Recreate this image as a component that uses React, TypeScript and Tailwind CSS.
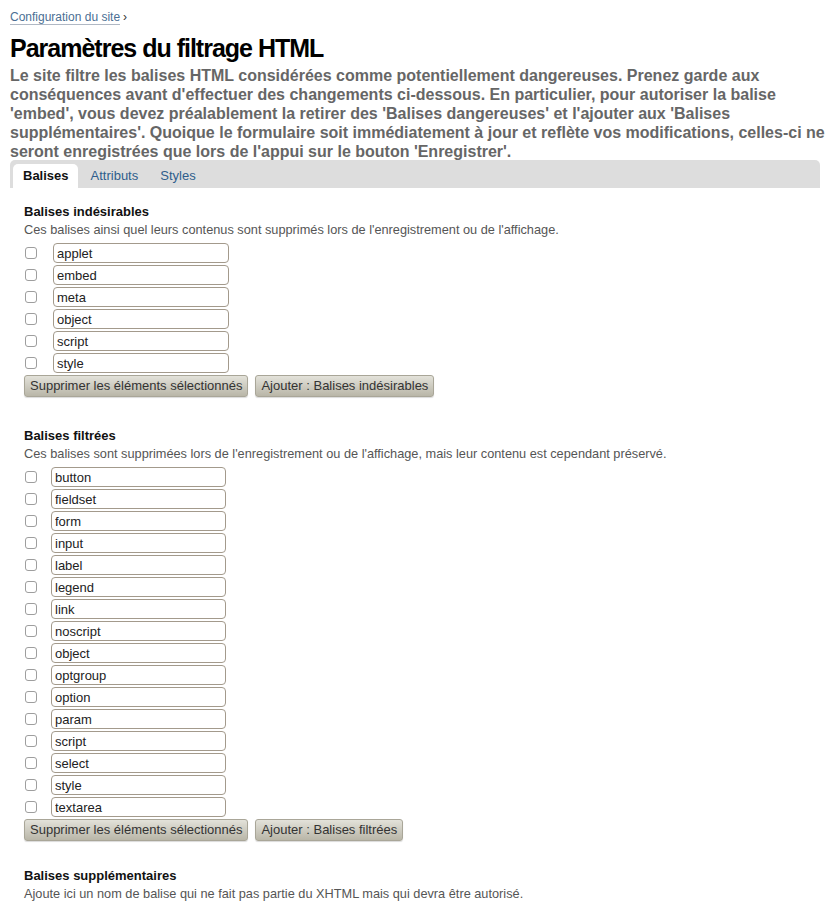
import React from 'react';

const undesirable = ['applet', 'embed', 'meta', 'object', 'script', 'style'];
const filtered = [
  'button', 'fieldset', 'form', 'input', 'label', 'legend', 'link', 'noscript',
  'object', 'optgroup', 'option', 'param', 'script', 'select', 'style', 'textarea',
];

function TagRow({ name, inputWidth, gap }: { name: string; inputWidth: string; gap: string }) {
  return (
    <div className={`flex items-center h-[22px] ${gap}`}>
      <input
        type="checkbox"
        className="ml-[1px] w-[12px] h-[12px] appearance-none rounded-[3px] border border-[#9e9e9e] bg-white"
      />
      <input
        type="text"
        defaultValue={name}
        className={`${inputWidth} h-[20px] rounded-[4px] border border-[#a39a8c] bg-white px-[3px] text-[13px] text-[#222] outline-none`}
      />
    </div>
  );
}

function Button({ children }: { children: React.ReactNode }) {
  return (
    <button className="h-[22px] px-[5px] rounded-[3px] border border-[#a9a698] bg-gradient-to-b from-[#e3e2da] to-[#b9b6a8] text-[13px] text-[#333] shadow-[0_1px_1px_rgba(0,0,0,0.15)]">
      {children}
    </button>
  );
}

function Section({
  title,
  desc,
  tags,
  addLabel,
  gap,
  inputWidth,
  bottom,
}: {
  title: string;
  desc: string;
  tags: string[];
  addLabel: string;
  gap: string;
  inputWidth: string;
  bottom: string;
}) {
  return (
    <div className={bottom}>
      <h3 className="text-[13px] font-bold text-[#111] leading-[18px]">{title}</h3>
      <p className="text-[12.75px] text-[#555] leading-[18px] mb-[3px]">{desc}</p>
      <div className="flex flex-col">
        {tags.map((t, i) => (
          <TagRow key={i} name={t} inputWidth={inputWidth} gap={gap} />
        ))}
      </div>
      <div className="flex gap-[7px] mt-[1px]">
        <Button>Supprimer les éléments sélectionnés</Button>
        <Button>{addLabel}</Button>
      </div>
    </div>
  );
}

export default function App() {
  return (
    <div
      className="w-[828px] h-[905px] overflow-hidden bg-white px-[10px] pt-[9px]"
      style={{ fontFamily: '"Liberation Sans", Arial, sans-serif' }}
    >
      <div className="text-[12px] leading-[16px] text-[#333]">
        <a className="text-[#4b6f94] border-b border-[#b0b8c4]">Configuration du site</a>
        <span className="ml-[3px]">›</span>
      </div>
      <h1 className="mt-[8px] text-[25px] leading-[30px] font-bold tracking-[-1px] text-black">
        Paramètres du filtrage HTML
      </h1>
      <p className="mt-[3px] mr-[-10px] text-[16px] leading-[19px] font-bold text-[#666]">
        Le site filtre les balises HTML considérées comme potentiellement dangereuses. Prenez garde aux
        conséquences avant d'effectuer des changements ci-dessous. En particulier, pour autoriser la balise
        'embed', vous devez préalablement la retirer des 'Balises dangereuses' et l'ajouter aux 'Balises
        supplémentaires'. Quoique le formulaire soit immédiatement à jour et reflète vos modifications, celles-ci ne
        seront enregistrées que lors de l'appui sur le bouton 'Enregistrer'.
      </p>
      <div className="mt-[-1px] w-[810px] h-[28px] bg-[#dddddd] rounded-t-[5px] flex items-end pl-[3px]">
        <div className="h-[24px] pl-[10px] pr-[9px] bg-white rounded-t-[5px] text-[13px] font-bold text-[#111] flex items-center">
          Balises
        </div>
        <div className="h-[24px] pl-[13px] pr-[11px] text-[13px] text-[#2f5d8c] flex items-center">Attributs</div>
        <div className="h-[24px] px-[11px] text-[13px] text-[#2f5d8c] flex items-center">Styles</div>
      </div>
      <div className="pl-[14px] pt-[15px]">
        <Section
          title="Balises indésirables"
          desc="Ces balises ainsi quel leurs contenus sont supprimés lors de l'enregistrement ou de l'affichage."
          tags={undesirable}
          addLabel="Ajouter : Balises indésirables"
          gap="gap-[16px]"
          inputWidth="w-[176px]"
          bottom="mb-[30px]"
        />
        <Section
          title="Balises filtrées"
          desc="Ces balises sont supprimées lors de l'enregistrement ou de l'affichage, mais leur contenu est cependant préservé."
          tags={filtered}
          addLabel="Ajouter : Balises filtrées"
          gap="gap-[14px]"
          inputWidth="w-[175px]"
          bottom="mb-[26px]"
        />
        <h3 className="text-[13px] font-bold text-[#111] leading-[18px]">Balises supplémentaires</h3>
        <p className="text-[12.75px] text-[#555] leading-[18px]">
          Ajoute ici un nom de balise qui ne fait pas partie du XHTML mais qui devra être autorisé.
        </p>
      </div>
    </div>
  );
}
